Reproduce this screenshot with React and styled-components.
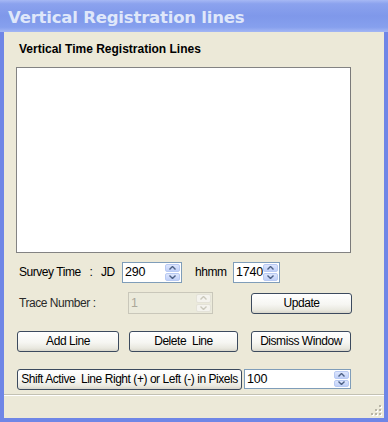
import React from "react";
import styled, { createGlobalStyle } from "styled-components";

const Global = createGlobalStyle`
  html, body { margin: 0; padding: 0; background: #ece9d8; }
  body { font-family: "Liberation Sans", Arial, sans-serif; }
`;

const Window = styled.div`
  width: 388px;
  height: 422px;
  box-sizing: border-box;
  display: flex;
  flex-direction: column;
  background: #6f86e6;
`;

const TitleBar = styled.div`
  height: 32px;
  flex: none;
  display: flex;
  align-items: center;
  padding-left: 8px;
  padding-top: 2px;
  box-sizing: border-box;
  background: linear-gradient(to bottom, #a6b8f4 0%, #8ba2ee 12%, #7f98ea 50%, #86a0ee 85%, #a3b6f4 100%);
  color: #dfe7fa;
  font-family: "DejaVu Sans", Verdana, sans-serif;
  font-weight: bold;
  font-size: 16.5px;
  letter-spacing: -0.2px;
`;

const Client = styled.div`
  flex: 1;
  margin: 0 4px 4px 4px;
  background: #ece9d8;
  display: flex;
  flex-direction: column;
`;

const Body = styled.div`
  flex: 1;
  padding: 0 0 0 12px;
  display: flex;
  flex-direction: column;
  font-size: 12px;
  letter-spacing: -0.45px;
  color: #000;
`;

const Heading = styled.div`
  font-weight: bold;
  font-size: 12px;
  letter-spacing: 0;
  margin: 10px 0 0 3px;
  height: 14px;
  line-height: 14px;
`;

const ListBox = styled.div`
  width: 335px;
  height: 186px;
  box-sizing: border-box;
  margin-top: 11px;
  background: #fff;
  border: 1px solid #838383;
  border-right-color: #7a7a7a;
`;

const Row = styled.div`
  display: flex;
  align-items: center;
  height: 22px;
  margin-top: ${(p) => p.$top}px;
`;

const Label = styled.span`
  display: inline-block;
  width: ${(p) => (p.$w ? `${p.$w}px` : "auto")};
  margin-left: ${(p) => p.$ml || 0}px;
  color: ${(p) => (p.$dim ? "#2a2a2a" : "#000")};
  white-space: pre;
`;

const SpinBox = styled.div`
  display: flex;
  width: ${(p) => p.$w}px;
  height: ${(p) => p.$h || 20}px;
  box-sizing: border-box;
  margin-left: ${(p) => p.$ml || 0}px;
  border: 1px solid ${(p) => (p.$disabled ? "#c9c7ba" : "#7f9db9")};
  background: ${(p) => (p.$disabled ? "#ebeadb" : "#fff")};
`;

const SpinText = styled.div`
  flex: 1;
  padding-left: 2px;
  display: flex;
  align-items: center;
  font-size: 12.5px;
  letter-spacing: -0.2px;
  color: ${(p) => (p.$disabled ? "#aca899" : "#000")};
`;

const SpinButtons = styled.div`
  width: 15px;
  display: flex;
  flex-direction: column;
  padding: 1px 1px 1px 0;
  gap: 1px;
`;

const SpinHalf = styled.div`
  flex: 1;
  display: flex;
  align-items: center;
  justify-content: center;
  border-radius: 2px;
  background: ${(p) =>
    p.$disabled
      ? "#f4f3ee"
      : "linear-gradient(to bottom, #dde6fd, #c0d0f8)"};
  border: 1px solid ${(p) => (p.$disabled ? "#e4e2d8" : "#b9caf3")};
  box-sizing: border-box;
`;

const Arrow = ({ up, disabled }) => (
  <svg width="7" height="4" viewBox="0 0 7 4">
    <path
      d={up ? "M0.5 3.5 L3.5 0.5 L6.5 3.5" : "M0.5 0.5 L3.5 3.5 L6.5 0.5"}
      fill="none"
      stroke={disabled ? "#cac8bb" : "#4d6185"}
      strokeWidth="1.4"
    />
  </svg>
);

const Spinner = ({ value, w, h, ml, disabled }) => (
  <SpinBox $w={w} $h={h} $ml={ml} $disabled={disabled}>
    <SpinText $disabled={disabled}>{value}</SpinText>
    <SpinButtons>
      <SpinHalf $disabled={disabled}>
        <Arrow up disabled={disabled} />
      </SpinHalf>
      <SpinHalf $disabled={disabled}>
        <Arrow disabled={disabled} />
      </SpinHalf>
    </SpinButtons>
  </SpinBox>
);

const Button = styled.button`
  width: ${(p) => p.$w}px;
  height: ${(p) => p.$h || 21}px;
  margin-left: ${(p) => p.$ml || 0}px;
  box-sizing: border-box;
  padding: 0;
  border: 1px solid #3c4a5e;
  border-radius: 3px;
  background: linear-gradient(to bottom, #ffffff 0%, #f6f6f2 55%, #e9e8df 85%, #d8d6cb 100%);
  font-family: "Liberation Sans", Arial, sans-serif;
  font-size: 12px;
  letter-spacing: -0.45px;
  color: #000;
  white-space: pre;
`;

const StatusBar = styled.div`
  height: 21px;
  flex: none;
  border-top: 1px solid #c3c1b3;
  box-shadow: inset 0 1px 0 #fff;
  display: flex;
  justify-content: flex-end;
  align-items: flex-end;
  padding: 0 2px 2px 0;
`;

const Grip = () => (
  <svg width="11" height="11" viewBox="0 0 11 11">
    {[
      [8, 0],
      [4, 4],
      [8, 4],
      [0, 8],
      [4, 8],
      [8, 8],
    ].map(([x, y]) => (
      <g key={`${x}-${y}`}>
        <rect x={x + 1} y={y + 1} width="2" height="2" fill="#fff" />
        <rect x={x} y={y} width="2" height="2" fill="#b8b5a6" />
      </g>
    ))}
  </svg>
);

export default function App() {
  return (
    <>
      <Global />
      <Window>
        <TitleBar>Vertical Registration lines</TitleBar>
        <Client>
          <Body>
            <Heading>Vertical Time Registration Lines</Heading>
            <ListBox />
            <Row $top={8}>
              <Label $ml={3} $w={103}>{"Survey Time   :   JD"}</Label>
              <Spinner value="290" w={60} h={21} />
              <Label $ml={13} $w={38}>hhmm</Label>
              <Spinner value="1740" w={47} h={21} />
            </Row>
            <Row $top={9}>
              <Label $ml={3} $w={109} $dim>{"Trace Number :"}</Label>
              <Spinner value="1" w={85} h={22} disabled />
              <Button $w={101} $ml={38}>Update</Button>
            </Row>
            <Row $top={16}>
              <Button $w={102} $ml={1}>Add Line</Button>
              <Button $w={109} $ml={10}>{"Delete  Line"}</Button>
              <Button $w={100} $ml={13}>Dismiss Window</Button>
            </Row>
            <Row $top={16}>
              <Button $w={225} $ml={1}>{"Shift Active  Line Right (+) or Left (-) in Pixels"}</Button>
              <Spinner value="100" w={107} h={20} ml={2} />
            </Row>
          </Body>
          <StatusBar>
            <Grip />
          </StatusBar>
        </Client>
      </Window>
    </>
  );
}
